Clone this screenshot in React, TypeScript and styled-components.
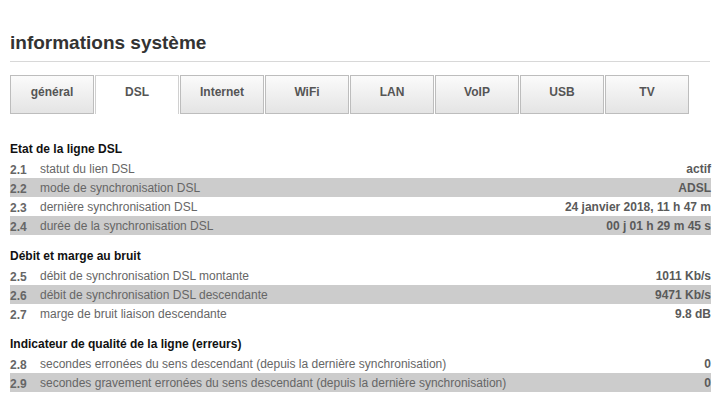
import styled, { createGlobalStyle } from "styled-components";

type Row = { num: string; label: string; value: string };
type Section = { title: string; rows: Row[] };

const tabs = ["général", "DSL", "Internet", "WiFi", "LAN", "VoIP", "USB", "TV"];

const sections: Section[] = [
  {
    title: "Etat de la ligne DSL",
    rows: [
      { num: "2.1", label: "statut du lien DSL", value: "actif" },
      { num: "2.2", label: "mode de synchronisation DSL", value: "ADSL" },
      { num: "2.3", label: "dernière synchronisation DSL", value: "24 janvier 2018, 11 h 47 m" },
      { num: "2.4", label: "durée de la synchronisation DSL", value: "00 j 01 h 29 m 45 s" },
    ],
  },
  {
    title: "Débit et marge au bruit",
    rows: [
      { num: "2.5", label: "débit de synchronisation DSL montante", value: "1011 Kb/s" },
      { num: "2.6", label: "débit de synchronisation DSL descendante", value: "9471 Kb/s" },
      { num: "2.7", label: "marge de bruit liaison descendante", value: "9.8 dB" },
    ],
  },
  {
    title: "Indicateur de qualité de la ligne (erreurs)",
    rows: [
      {
        num: "2.8",
        label: "secondes erronées du sens descendant (depuis la dernière synchronisation)",
        value: "0",
      },
      {
        num: "2.9",
        label: "secondes gravement erronées du sens descendant (depuis la dernière synchronisation)",
        value: "0",
      },
    ],
  },
];

export default function App() {
  return (
    <>
      <GlobalStyle />
      <Page>
        <Title>informations système</Title>
        <Tabs>
          {tabs.map((t) => (
            <Tab key={t} $active={t === "DSL"}>
              {t}
            </Tab>
          ))}
        </Tabs>
        {sections.map((s, idx) => (
          <SectionBox key={s.title} $first={idx === 0}>
            <SectionTitle>{s.title}</SectionTitle>
            {s.rows.map((r, i) => (
              <InfoRow key={r.num} $shaded={i % 2 === 1}>
                <Num>{r.num}</Num>
                <Label>{r.label}</Label>
                <Value>{r.value}</Value>
              </InfoRow>
            ))}
          </SectionBox>
        ))}
      </Page>
    </>
  );
}

const GlobalStyle = createGlobalStyle`
  body {
    margin: 0;
    background: #fff;
    font-family: "Liberation Sans", Arial, sans-serif;
  }
`;

const Page = styled.div`
  width: 701px;
  padding: 0 14px 0 10px;
`;

const Title = styled.h1`
  margin: 0;
  padding-top: 32px;
  height: 29px;
  font-size: 19px;
  font-weight: bold;
  color: #333;
  border-bottom: 1px solid #d8d8d8;
  width: 700px;
`;

const Tabs = styled.div`
  display: flex;
  gap: 1px;
  margin-top: 13px;
`;

const Tab = styled.div<{ $active?: boolean }>`
  width: 84px;
  height: 39px;
  box-sizing: border-box;
  display: flex;
  align-items: center;
  justify-content: center;
  padding-bottom: ${(p) => (p.$active ? "6px" : "5px")};
  font-size: 12px;
  font-weight: bold;
  color: #555;
  border: 1px solid ${(p) => (p.$active ? "#d0d0d0" : "#bdbdbd")};
  border-bottom: ${(p) => (p.$active ? "none" : "1px solid #bdbdbd")};
  background: ${(p) =>
    p.$active ? "#fff" : "linear-gradient(to bottom, #fbfbfb, #e4e4e4)"};
`;

const SectionBox = styled.div<{ $first?: boolean }>`
  margin-top: ${(p) => (p.$first ? "26px" : "12px")};
`;

const SectionTitle = styled.div`
  height: 19px;
  line-height: 19px;
  font-size: 12px;
  font-weight: bold;
  color: #111;
`;

const InfoRow = styled.div<{ $shaded?: boolean }>`
  display: flex;
  align-items: center;
  height: 19px;
  width: 701px;
  font-size: 12px;
  background: ${(p) => (p.$shaded ? "#cccccc" : "transparent")};
`;

const Num = styled.span`
  width: 30px;
  font-weight: bold;
  color: #666;
  padding-top: 3px;
`;

const Label = styled.span`
  flex: 1;
  color: #666;
`;

const Value = styled.span`
  font-weight: bold;
  color: #5a5a5a;
`;
